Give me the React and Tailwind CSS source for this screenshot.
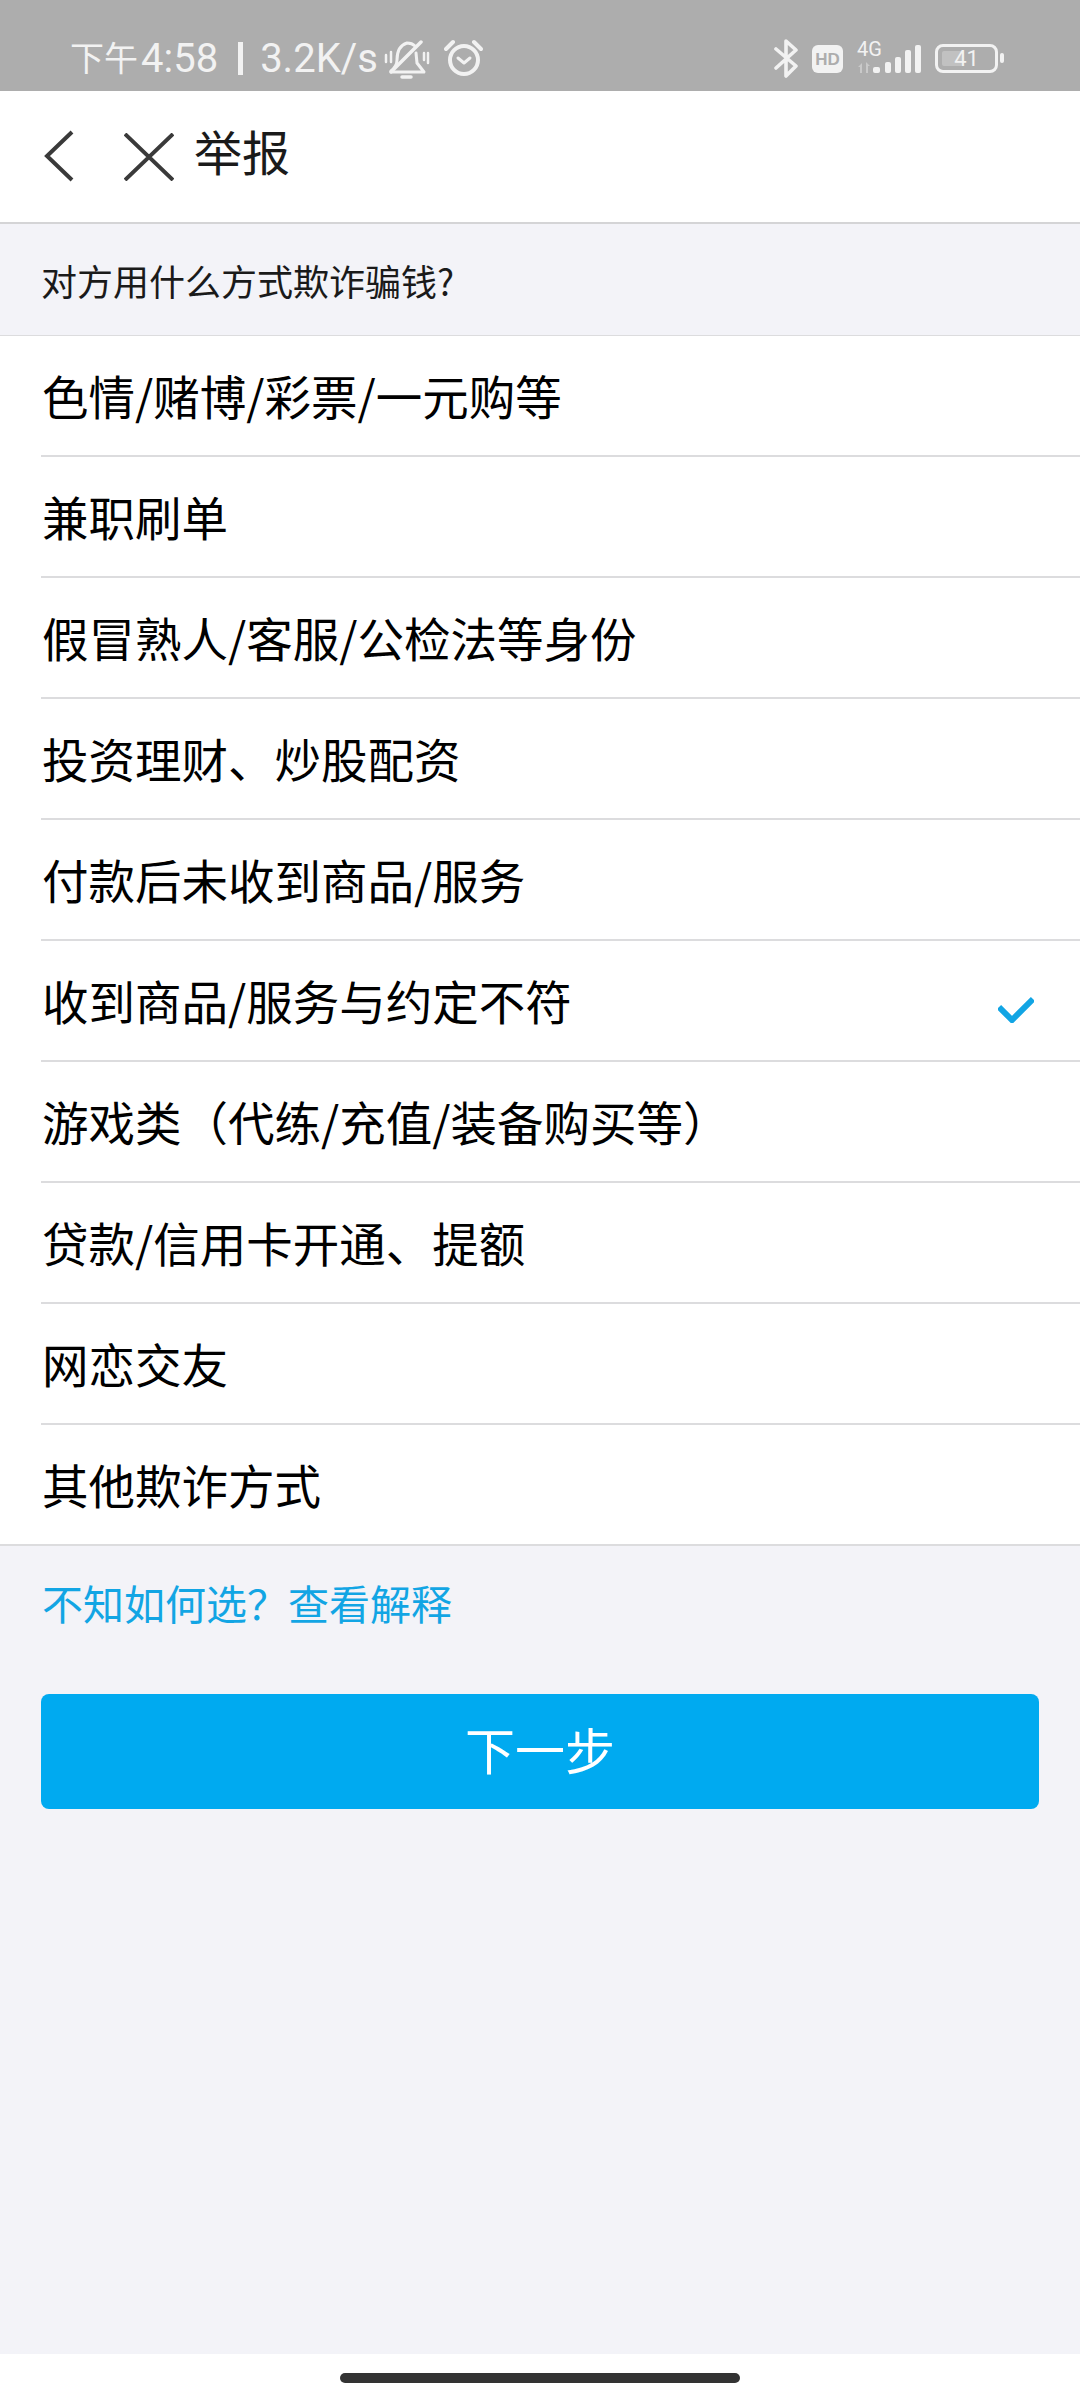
import { Fragment } from 'react';

const options = [
  '色情/赌博/彩票/一元购等',
  '兼职刷单',
  '假冒熟人/客服/公检法等身份',
  '投资理财、炒股配资',
  '付款后未收到商品/服务',
  '收到商品/服务与约定不符',
  '游戏类（代练/充值/装备购买等）',
  '贷款/信用卡开通、提额',
  '网恋交友',
  '其他欺诈方式',
];

const selected = 5;

function StatusBar() {
  return (
    <div className="h-[91px] bg-[#adadad] flex items-start pt-[38px] pl-[70px] text-[#f2f2f2] font-['Roboto','Noto_Sans_CJK_SC',sans-serif]">
      <span className="text-[34px] leading-[42px] whitespace-nowrap">下午</span>
      <span className="ml-[3px] text-[40px] leading-[42px] whitespace-nowrap">4:58</span>
      <div className="ml-[20px] mt-[4px] w-[5px] h-[33px] bg-[#f2f2f2]" />
      <span className="ml-[17px] text-[40px] leading-[42px] whitespace-nowrap">3.2K/s</span>
      {/* mute bell */}
      <svg className="ml-[6px] mt-[2px]" width="46" height="40" viewBox="0 0 46 40" fill="none" stroke="#f2f2f2" strokeWidth="3" strokeLinecap="round" strokeLinejoin="round">
        <path d="M7 31 Q13 26 13 20 Q13 6 23 3 Q28 3 31 6" />
        <path d="M32 13 L33 23 L40 32 H8" />
        <path d="M37 2 L7 32" strokeWidth="3.5" />
        <path d="M18 37 H27" strokeWidth="3.5" />
        <path d="M2 15 V22 M7 12 V22 M40 13 V20 M44 13 V23" strokeWidth="2.5" />
      </svg>
      <svg className="ml-[14px] mt-[1px]" width="39" height="38" viewBox="0 0 39 38" fill="none" stroke="#f2f2f2" strokeWidth="4" strokeLinecap="round" strokeLinejoin="round">
        <circle cx="20" cy="21" r="14" />
        <path d="M14 19 L20 24 L26 19" strokeWidth="3" />
        <path d="M2 10 L9 3 M37 10 L30 3" />
      </svg>
      <div className="ml-auto mr-[76px] mt-[1px] flex items-start">
        <svg width="26" height="39" viewBox="0 0 26 39" fill="none" stroke="#f2f2f2" strokeWidth="3.6" strokeLinecap="round" strokeLinejoin="round">
          <path d="M3 10 L23 27 L13 37 V2 L23 11 L3 29" />
        </svg>
        <div className="ml-[13px] mt-[6px] w-[31px] h-[28px] rounded-[6px] bg-[#f2f2f2] flex items-center justify-center text-[#adadad] text-[17px] leading-none font-bold font-['Liberation_Sans',sans-serif]">
          HD
        </div>
        <div className="ml-[14px] relative w-[65px] h-[38px]">
          <span className="absolute left-0 top-0 text-[20px] leading-[20px] font-['Roboto',sans-serif]">4G</span>
          <svg className="absolute left-0 top-0" width="65" height="38" viewBox="0 0 65 38" fill="#f2f2f2">
            <path d="M1 28 L5 24 V34 H3 V28 Z M9 23 L13 27 H11 V34 H9 Z" opacity="0.4" />
            <rect x="16" y="28" width="7" height="6" rx="2" />
            <rect x="28" y="23" width="6" height="11" rx="2" />
            <rect x="38" y="18" width="6" height="16" rx="2" />
            <rect x="48" y="11" width="6" height="23" rx="2" />
            <rect x="58" y="6" width="6" height="28" rx="2" />
          </svg>
        </div>
        <div className="ml-[13px] mt-[5px] w-[63px] h-[29px] rounded-[8px] border-[3px] border-[#f2f2f2] relative flex items-center justify-center">
          <div className="absolute left-[4px] top-[4px] bottom-[4px] w-[21px] rounded-[2px] bg-[#f2f2f2] opacity-30" />
          <span className="relative text-[22px] leading-none font-['Roboto',sans-serif]">41</span>
        </div>
        <div className="ml-[2px] mt-[14px] w-[4px] h-[10px] rounded-full bg-[#f2f2f2]" />
      </div>
    </div>
  );
}

export default function App() {
  return (
    <div className="w-[1080px] h-[2400px] flex flex-col bg-white overflow-hidden font-['Noto_Sans_CJK_SC',sans-serif]">
      <StatusBar />

      {/* 标题栏 */}
      <div className="h-[133px] bg-white border-b-2 border-[#d4d4d6] flex items-center text-black">
        <svg className="ml-[43px] -mt-[1px]" width="32" height="52" viewBox="0 0 32 52" fill="none" stroke="#3a3a3a" strokeWidth="4">
          <path d="M29 2 L4 26 L29 50" />
        </svg>
        <svg className="ml-[49px]" width="50" height="48" viewBox="0 0 50 48" fill="none" stroke="#3a3a3a" strokeWidth="4">
          <path d="M1 1 L49 47 M49 1 L1 47" />
        </svg>
        <span className="ml-[20px] text-[48px] leading-[60px] -mt-[14px] text-[#1a1a1a]">举报</span>
      </div>

      {/* 질문 */}
      <div className="h-[111px] bg-[#f3f3f8] flex items-center pl-[41px] text-[36px] text-[#1a1a1a] leading-none">
        对方用什么方式欺诈骗钱?
      </div>

      <div className="bg-white border-t border-b-2 border-[#dcdcde]">
        {options.map((text, idx) => (
          <Fragment key={text}>
            <div className="h-[119px] pl-[42px] pr-[46px] flex items-center justify-between">
              <span className="text-[46.5px] leading-none text-black whitespace-nowrap">{text}</span>
              {idx === selected && (
                <svg className="mt-[16px]" width="36" height="28" viewBox="0 0 36 28" fill="none" stroke="#12a5e4" strokeWidth="6">
                  <path d="M1 12 L14 25 L35 4" />
                </svg>
              )}
            </div>
            {idx < options.length - 1 && <div className="ml-[41px] h-[2px] bg-[#dcdcde]" />}
          </Fragment>
        ))}
      </div>

      {/* 하단 영역 */}
      <div className="flex-1 bg-[#f3f3f8] px-[41px]">
        <div className="mt-[31px] pl-[1px] text-[41px] leading-[50px] text-[#12a5e4]">不知如何选？查看解释</div>
        <button className="mt-[67px] w-full h-[115px] rounded-[8px] bg-[#00aaf0] text-white text-[50px] flex items-center justify-center pb-[6px]">
          下一步
        </button>
      </div>

      <div className="h-[46px] bg-white flex justify-center pt-[19px]">
        <div className="w-[400px] h-[10px] rounded-full bg-[#333333]" />
      </div>
    </div>
  );
}
